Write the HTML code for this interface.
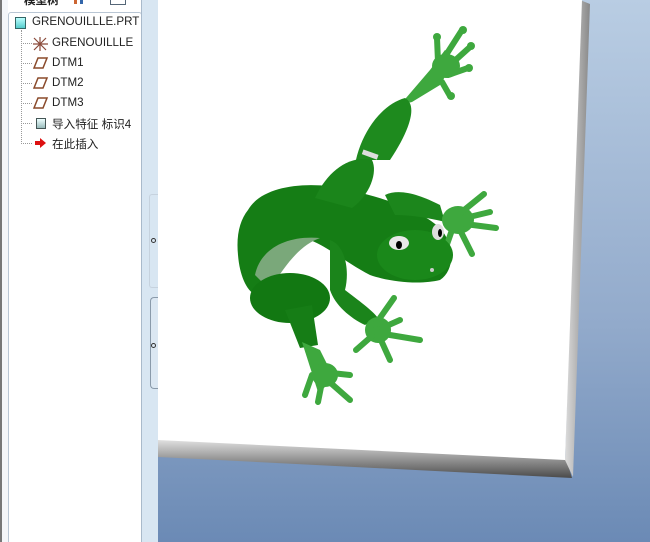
<!DOCTYPE html>
<html style="overflow:hidden"><head><meta charset="utf-8"><style>
html,body{margin:0;width:650px;height:542px;overflow:hidden}
body{position:relative;background:#fff;font-family:"Liberation Sans","Noto Sans CJK SC",sans-serif}
.abs{position:absolute}
.t{position:absolute;font-size:11.6px;color:#222;white-space:nowrap}
</style></head><body>
<div class="abs" style="left:0;top:0;width:2px;height:542px;background:#777"></div>
<div class="abs" style="left:2px;top:0;width:6px;height:542px;background:#f4f6f9"></div>
<div class="abs" style="left:8px;top:12px;width:132px;height:535px;border:1px solid #b9c6d4;border-radius:3px;background:#fff"></div>
<div class="t" style="left:24px;top:-8px;font-weight:bold">模型树</div>
<div class="abs" style="left:74px;top:-4px;width:3px;height:8px;background:#c63"></div>
<div class="abs" style="left:80px;top:-4px;width:3px;height:8px;background:#36a"></div>
<div class="abs" style="left:110px;top:-4px;width:14px;height:8px;border:1px solid #567;border-top:none"></div>
<div class="abs" style="left:15px;top:17px;width:9px;height:10px;background:linear-gradient(#bff,#5cc);border:1px solid #366"></div>
<div class="t" style="left:32px;top:15px">GRENOUILLLE.PRT</div>
<div class="abs" style="left:21px;top:30px;height:114px;border-left:1px dotted #999"></div>
<div class="abs" style="left:21px;top:43px;width:11px;border-top:1px dotted #999"></div>
<div class="abs" style="left:21px;top:63px;width:11px;border-top:1px dotted #999"></div>
<div class="abs" style="left:21px;top:83px;width:11px;border-top:1px dotted #999"></div>
<div class="abs" style="left:21px;top:103px;width:11px;border-top:1px dotted #999"></div>
<div class="abs" style="left:21px;top:123px;width:11px;border-top:1px dotted #999"></div>
<div class="abs" style="left:21px;top:143px;width:11px;border-top:1px dotted #999"></div>
<svg class="abs" style="left:32px;top:36px" width="18" height="16"><path d="M2 2L14 14M14 2L2 14M8 1V15M1 8H16" stroke="#8a4a3a" stroke-width="1.2"/></svg>
<div class="t" style="left:52px;top:36px">GRENOUILLLE</div>
<svg class="abs" style="left:33px;top:57px" width="16" height="12"><path d="M5 1H14L10 11H1Z" fill="none" stroke="#8a4a2a" stroke-width="1.5"/></svg>
<div class="t" style="left:52px;top:56px">DTM1</div>
<svg class="abs" style="left:33px;top:77px" width="16" height="12"><path d="M5 1H14L10 11H1Z" fill="none" stroke="#8a4a2a" stroke-width="1.5"/></svg>
<div class="t" style="left:52px;top:76px">DTM2</div>
<svg class="abs" style="left:33px;top:97px" width="16" height="12"><path d="M5 1H14L10 11H1Z" fill="none" stroke="#8a4a2a" stroke-width="1.5"/></svg>
<div class="t" style="left:52px;top:96px">DTM3</div>
<div class="abs" style="left:36px;top:118px;width:8px;height:9px;background:linear-gradient(#eff,#9bb);border:1px solid #455"></div>
<div class="t" style="left:52px;top:116px">导入特征 标识4</div>
<svg class="abs" style="left:34px;top:137px" width="14" height="12"><path d="M1 4H6V1L12 6L6 11V8H1Z" fill="#d11"/></svg>
<div class="t" style="left:52px;top:136px">在此插入</div>
<div class="abs" style="left:141px;top:0;width:17px;height:542px;background:#d8e6f2;border-left:1px solid #a9bacb"></div>
<div class="abs" style="left:149px;top:194px;width:9px;height:92px;border:1px solid #c6d2de;border-right:none;border-radius:3px 0 0 3px"></div>
<div class="abs" style="left:151px;top:238px;width:3px;height:3px;border:1px solid #333;border-radius:50%"></div>
<div class="abs" style="left:150px;top:297px;width:8px;height:90px;border:1px solid #8a9aaa;border-right:none;border-radius:4px 0 0 4px;background:#dbe7f2"></div>
<div class="abs" style="left:151px;top:343px;width:3px;height:3px;border:1px solid #333;border-radius:50%"></div>
<div class="abs" style="left:158px;top:0;width:492px;height:542px;background:linear-gradient(#b9cde3,#92aacb 60%,#6b8ab5)"></div>
<svg class="abs" style="left:158px;top:0" width="492" height="542" viewBox="158 0 492 542">
<defs>
<linearGradient id="bb" x1="0" y1="0" x2="0" y2="1"><stop offset="0" stop-color="#e8e8e8"/><stop offset=".5" stop-color="#999"/><stop offset="1" stop-color="#4a4a4a"/></linearGradient>
<linearGradient id="rb" x1="0" y1="0" x2="1" y2="0"><stop offset="0" stop-color="#ddd"/><stop offset="1" stop-color="#888"/></linearGradient>
</defs>
<polygon points="158,438 566,458 572,478 158,457" fill="url(#bb)"/>
<polygon points="580,0 590,4 573,477 565,460" fill="url(#rb)"/>
<polygon points="158,0 582,0 565,460 158,440" fill="#fff"/>
<g stroke="none">
<g fill="#3ea83e">
<path d="M400,105 L430,70 L445,50 L455,60 L440,85 L412,102Z"/>
<path d="M438,62 L437,38 M446,55 L462,30 M450,65 L470,47 M448,75 L468,68 M442,82 L450,96" stroke="#3ea83e" stroke-width="6" stroke-linecap="round"/>
<circle cx="437" cy="37" r="4"/><circle cx="463" cy="30" r="4"/><circle cx="471" cy="46" r="4"/><circle cx="469" cy="68" r="4"/><circle cx="451" cy="96" r="4"/>
<ellipse cx="446" cy="66" rx="14" ry="12"/>
</g>
<path d="M355,165 C360,135 380,105 405,98 C418,105 410,130 390,160 L372,160Z" fill="#1e8a1e"/>
<rect x="362" y="152" width="16" height="5" fill="#ddd" transform="rotate(20 370 155)"/>
<path d="M248,210 C262,185 310,180 350,190 C390,200 420,210 440,228 C455,245 455,270 440,280 C420,285 390,282 370,275 C345,262 330,248 310,240 C285,240 268,270 262,295 C250,298 240,280 238,255 C236,235 240,220 248,210Z" fill="#157d15"/>
<path d="M315,198 C328,170 350,155 372,160 C378,172 370,195 352,208Z" fill="#1b851b"/>
<path d="M255,275 C260,250 285,235 320,238 C300,245 285,265 270,290Z" fill="#7aa87a"/>
<path d="M385,195 C400,188 420,195 440,205 L445,222 C430,218 410,215 395,215Z" fill="#1c861c"/>
<g fill="#3ea83e">
<ellipse cx="458" cy="220" rx="16" ry="14"/>
<path d="M458,215 L484,194 M465,218 L490,212 M465,224 L496,228 M460,230 L472,254 M452,230 L445,250" stroke="#3ea83e" stroke-width="6" stroke-linecap="round"/>
</g>
<ellipse cx="290" cy="298" rx="40" ry="25" fill="#127812"/>
<path d="M285,310 L312,305 L318,345 L300,348Z" fill="#167d16"/>
<g fill="#3ea83e">
<path d="M302,342 L320,350 L335,380 L318,392Z"/>
<path d="M322,372 L350,375 M325,378 L350,400 M322,382 L318,402 M312,375 L305,395" stroke="#3ea83e" stroke-width="6" stroke-linecap="round"/>
<ellipse cx="325" cy="375" rx="13" ry="12"/>
</g>
<path d="M330,240 C345,245 350,270 345,290 C358,300 372,310 378,318 L365,325 C350,318 335,305 330,290Z" fill="#1b841b"/>
<g fill="#3ea83e">
<ellipse cx="378" cy="330" rx="13" ry="13"/>
<path d="M375,325 L394,298 M382,328 L400,320 M384,334 L420,340 M380,338 L390,360 M372,336 L356,350" stroke="#3ea83e" stroke-width="6" stroke-linecap="round"/>
</g>
<ellipse cx="415" cy="255" rx="38" ry="25" fill="#1a881a"/>
<ellipse cx="399" cy="243" rx="10" ry="7" fill="#e8e8e8"/><ellipse cx="399" cy="245" rx="3" ry="4" fill="#000"/>
<ellipse cx="438" cy="232" rx="6" ry="8" fill="#ddd"/><ellipse cx="440" cy="233" rx="2" ry="4" fill="#000"/>
<circle cx="432" cy="270" r="2" fill="#ccc"/>
</g>
</svg>
</body></html>
